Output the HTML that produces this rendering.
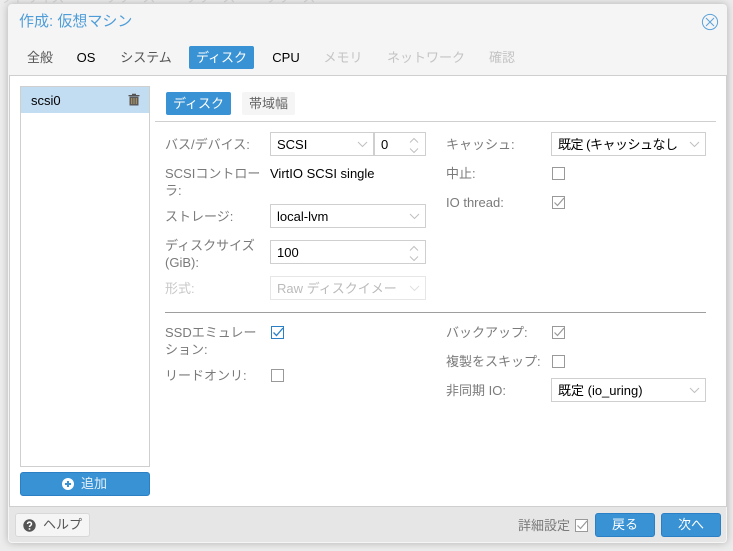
<!DOCTYPE html>
<html lang="ja"><head><meta charset="utf-8"><title>作成: 仮想マシン</title>
<style>
html,body{margin:0;padding:0}
body{width:733px;height:551px;overflow:hidden;position:relative;background:#ececec;font:13px "Liberation Sans","Noto Sans CJK JP",sans-serif;color:#000}
div,span{position:absolute;white-space:nowrap;box-sizing:border-box}
svg{position:absolute;display:block}
#win{left:8px;top:4px;width:719px;height:539px;background:#f5f5f5;border-radius:4px;box-shadow:0 0 8px rgba(0,0,0,.25)}
.tab{top:46px;height:23px;line-height:23px;text-align:center;border-radius:2px}
.dis{color:#c4c4c4}
.blue{background:#3892d4;color:#fff}
.l{color:#7a7a7a;line-height:17px}
.f{background:#fff;border:1px solid #cfcfcf;height:24px;line-height:23px;padding-left:6px}
.cb{width:13px;height:13px;border:1px solid #999;background:#fff}
.btn{background:#3892d4;border:1px solid #2b80c5;color:#fff;border-radius:3px;text-align:center}
</style></head><body>
<div style="left:0;top:-9px;color:#d4d4d4;font-size:13px;line-height:14px">ットサイズ</div>
<div style="left:104px;top:-9px;color:#d4d4d4;line-height:14px">リリース</div>
<div style="left:184px;top:-9px;color:#d4d4d4;line-height:14px">リリース</div>
<div style="left:264px;top:-9px;color:#d4d4d4;line-height:14px">リリース</div>

<div id="win"></div>
<div style="left:19px;top:12px;font-size:15px;line-height:20px;color:#4f9dd8">作成: 仮想マシン</div>
<svg style="left:701px;top:13px" width="18" height="18" viewBox="0 0 18 18" fill="none" stroke="#5ba2da" stroke-width="1"><circle cx="9" cy="9" r="7.600"/><path d="M5 5l8 8M13 5l-8 8"/></svg>

<div class="tab" style="left:20px;width:40px;color:#555">全般</div>
<div class="tab" style="left:70px;width:32px">OS</div>
<div class="tab" style="left:112px;width:68px;color:#555">システム</div>
<div class="tab blue" style="left:189px;width:65px">ディスク</div>
<div class="tab" style="left:264px;width:44px">CPU</div>
<div class="tab dis" style="left:318px;width:50px">メモリ</div>
<div class="tab dis" style="left:379px;width:94px">ネットワーク</div>
<div class="tab dis" style="left:482px;width:40px">確認</div>

<div style="left:9px;top:75px;width:718px;height:432px;background:#fff;border:1px solid #cfcfcf"></div>

<div style="left:20px;top:86px;width:130px;height:381px;background:#fff;border:1px solid #cfcfcf"></div>
<div style="left:21px;top:87px;width:128px;height:26px;background:#c2dcf2"></div>
<div style="left:31px;top:92px;line-height:17px">scsi0</div>
<svg style="left:128px;top:93px" width="12" height="13" viewBox="0 0 12 13"><path d="M0.500 2h11v1.200H0.500zM4 .8h4v1.200H4z" fill="#555"/><path d="M1.500 3.600h9v8.900h-9z" fill="#5a5a5a"/><path d="M3.700 5v6M6 5v6M8.300 5v6" stroke="#b89a5e" stroke-width="1"/></svg>

<div class="btn" style="left:20px;top:472px;width:130px;height:24px"></div>
<svg style="left:62px;top:478px" width="12" height="12" viewBox="0 0 12 12"><circle cx="6" cy="6" r="6" fill="#fff"/><path d="M6 3v6M3 6h6" stroke="#3892d4" stroke-width="2"/></svg>
<div style="left:81px;top:475px;line-height:18px;color:#e4f0fa">追加</div>

<div class="tab blue" style="left:166px;top:92px;width:65px">ディスク</div>
<div class="tab" style="left:242px;top:92px;width:53px;background:#f5f5f5;color:#666">帯域幅</div>
<div style="left:155px;top:121px;width:561px;height:1px;background:#cfcfcf"></div>

<div class="l" style="left:165px;top:136px">バス/デバイス:</div>
<div class="f" style="left:270px;top:132px;width:104px">SCSI</div>
<svg style="left:357px;top:141px" width="11" height="7" viewBox="0 0 11 7" fill="none" stroke="#c0c0c0"><path d="M1 1l4.500 4.500L10 1"/></svg>
<div class="f" style="left:374px;top:132px;width:52px">0</div>
<svg style="left:409px;top:137px" width="10" height="17" viewBox="0 0 10 17" fill="none" stroke="#c0c0c0"><path d="M1 5.500l4-4 4 4M1 11.500l4 4 4-4"/></svg>

<div class="l" style="left:165px;top:165px">SCSIコントロー</div>
<div class="l" style="left:165px;top:182px">ラ:</div>
<div style="left:270px;top:165px;line-height:17px">VirtIO SCSI single</div>

<div class="l" style="left:165px;top:208px">ストレージ:</div>
<div class="f" style="left:270px;top:204px;width:156px">local-lvm</div>
<svg style="left:409px;top:213px" width="11" height="7" viewBox="0 0 11 7" fill="none" stroke="#c0c0c0"><path d="M1 1l4.500 4.500L10 1"/></svg>

<div class="l" style="left:165px;top:237px">ディスクサイズ</div>
<div class="l" style="left:165px;top:254px">(GiB):</div>
<div class="f" style="left:270px;top:240px;width:156px">100</div>
<svg style="left:409px;top:245px" width="10" height="17" viewBox="0 0 10 17" fill="none" stroke="#c0c0c0"><path d="M1 5.500l4-4 4 4M1 11.500l4 4 4-4"/></svg>

<div class="l" style="left:165px;top:280px;color:#c8c8c8">形式:</div>
<div class="f" style="left:270px;top:276px;width:156px;color:#bbb;border-color:#e6e6e6">Raw ディスクイメー</div>
<svg style="left:409px;top:285px" width="11" height="7" viewBox="0 0 11 7" fill="none" stroke="#e0e0e0"><path d="M1 1l4.500 4.500L10 1"/></svg>

<div class="l" style="left:446px;top:136px">キャッシュ:</div>
<div class="f" style="left:551px;top:132px;width:155px;letter-spacing:-.5px">既定 (キャッシュなし</div>
<svg style="left:689px;top:141px" width="11" height="7" viewBox="0 0 11 7" fill="none" stroke="#c0c0c0"><path d="M1 1l4.500 4.500L10 1"/></svg>

<div class="l" style="left:446px;top:165px">中止:</div>
<div class="cb" style="left:552px;top:167px"></div>
<div class="l" style="left:446px;top:194px">IO thread:</div>
<div class="cb" style="left:552px;top:196px"></div>
<svg style="left:552px;top:196px" width="13" height="13" viewBox="0 0 13 13" fill="none" stroke="#999" stroke-width="1.200"><path d="M2.500 6.500l3 3L12 2"/></svg>

<div style="left:165px;top:312px;width:541px;height:1px;background:#9e9e9e"></div>

<div class="l" style="left:165px;top:324px">SSDエミュレー</div>
<div class="l" style="left:165px;top:341px">ション:</div>
<div class="cb" style="left:271px;top:326px;border-color:#2b80c5"></div>
<svg style="left:271px;top:326px" width="13" height="13" viewBox="0 0 13 13" fill="none" stroke="#2b80c5" stroke-width="1.300"><path d="M2.500 6.500l3 3L12 2"/></svg>
<div class="l" style="left:165px;top:367px">リードオンリ:</div>
<div class="cb" style="left:271px;top:369px"></div>

<div class="l" style="left:446px;top:324px">バックアップ:</div>
<div class="cb" style="left:552px;top:326px"></div>
<svg style="left:552px;top:326px" width="13" height="13" viewBox="0 0 13 13" fill="none" stroke="#999" stroke-width="1.200"><path d="M2.500 6.500l3 3L12 2"/></svg>
<div class="l" style="left:446px;top:353px">複製をスキップ:</div>
<div class="cb" style="left:552px;top:355px"></div>
<div class="l" style="left:446px;top:382px">非同期 IO:</div>
<div class="f" style="left:551px;top:378px;width:155px">既定 (io_uring)</div>
<svg style="left:689px;top:387px" width="11" height="7" viewBox="0 0 11 7" fill="none" stroke="#c0c0c0"><path d="M1 1l4.500 4.500L10 1"/></svg>

<div style="left:9px;top:507px;width:717px;height:35px;background:#e6e6e6;border-radius:0 0 3px 3px"></div>
<div style="left:15px;top:513px;width:75px;height:24px;background:#f5f5f5;border:1px solid #d8d8d8;border-radius:3px"></div>
<svg style="left:23px;top:519px" width="13" height="13" viewBox="0 0 13 13"><circle cx="6.500" cy="6.500" r="6.200" fill="#555"/><path d="M4.500 5c0-2.500 4-2.500 4 0 0 1.500-2 1.500-2 3" fill="none" stroke="#fff" stroke-width="1.500"/><path d="M5.700 9.200h1.600v1.500H5.700z" fill="#fff"/></svg>
<div style="left:43px;top:516px;line-height:17px;color:#555">ヘルプ</div>
<div class="l" style="left:518px;top:517px">詳細設定</div>
<div class="cb" style="left:575px;top:519px"></div>
<svg style="left:575px;top:519px" width="13" height="13" viewBox="0 0 13 13" fill="none" stroke="#999" stroke-width="1.200"><path d="M2.500 6.500l3 3L12 2"/></svg>
<div class="btn" style="left:595px;top:513px;width:60px;height:24px;line-height:22px">戻る</div>
<div class="btn" style="left:661px;top:513px;width:60px;height:24px;line-height:22px">次へ</div>
</body></html>
